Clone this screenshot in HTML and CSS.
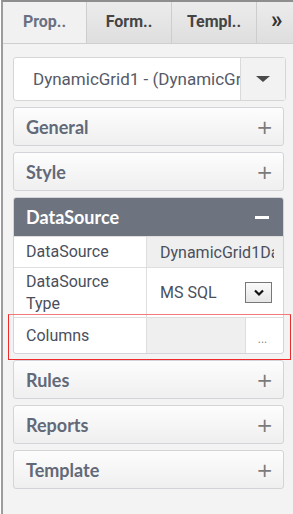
FILE: index.html
```html
<!DOCTYPE html>
<html>
<head>
	<title>Properties</title>
	<meta charset="utf-8">
	<link rel="stylesheet" href="styles.css">
</head>
<body>

	<div class="frame">
		<div class="tabs">
			<div class="tab active">Prop..</div>
			<div class="tab">Form..</div>
			<div class="tab">Templ..</div>
			<div class="tab more">&raquo;</div>
		</div>

		<div class="panel">
			<div class="picker">
				<span class="picker_text">DynamicGrid1 - (DynamicGrid)</span>
				<span class="picker_btn"><span class="caret"></span></span>
			</div>

			<div class="section"><span>General</span><span class="sign">+</span></div>
			<div class="section"><span>Style</span><span class="sign">+</span></div>

			<div class="group">
				<div class="section open"><span>DataSource</span><span class="minus"></span></div>
				<div class="row">
					<div class="name">DataSource</div>
					<div class="value grey"><span class="clip">DynamicGrid1DataSource</span></div>
				</div>
				<div class="row tall">
					<div class="name">DataSource<br>Type</div>
					<div class="value">MS SQL
						<span class="select_btn">
							<svg width="12" height="8" viewBox="0 0 12 8"><path d="M2 1.5 L6 5.5 L10 1.5" fill="none" stroke="#111" stroke-width="2.2"/></svg>
						</span>
					</div>
				</div>
				<div class="row cols">
					<div class="name">Columns</div>
					<div class="value grey"></div>
					<div class="dots">...</div>
				</div>
				<div class="mark"></div>
			</div>

			<div class="section"><span>Rules</span><span class="sign">+</span></div>
			<div class="section"><span>Reports</span><span class="sign">+</span></div>
			<div class="section"><span>Template</span><span class="sign">+</span></div>
		</div>
	</div>

</body>
</html>
```

FILE: styles.css
```css
* {
	box-sizing: border-box;
}

body {
	margin: 0px;
	background: white;
	font-family: Roboto, "Liberation Sans", sans-serif;
}

.frame {
	margin-left: 1px;
	height: 514px;
	background: #f3f3f4;
	border-left: 2px solid #9c9c9c;
	border-top: 2px solid #8e8e8e;
}

.tabs {
	display: flex;
	height: 42px;
	border-bottom: 1px solid #cfcfcf;
	background: linear-gradient(#ececec, #dedede);
}

.tab {
	width: 85px;
	border-right: 1px solid #cdcdcd;
	font-size: 16px;
	font-weight: bold;
	color: #454545;
	display: flex;
	align-items: center;
	justify-content: center;
	padding-bottom: 2px;
}

.tab.active {
	width: 84px;
	background: #f1f1f2;
	color: #6b7080;
}

.tab.more {
	width: auto;
	flex: 1;
	border-right: 0px;
	font-size: 23px;
	justify-content: flex-start;
	padding-left: 14px;
	padding-bottom: 5px;
	color: #333;
}

.panel {
	padding: 13px 9px 0px 10px;
	display: flex;
	flex-direction: column;
	gap: 6px;
}

.picker {
	display: flex;
	height: 44px;
	background: white;
	border: 1px solid #d6d6d6;
	border-radius: 3px;
	margin-right: -2px;
}

.picker_text {
	flex: 1;
	overflow: hidden;
	white-space: nowrap;
	font-size: 17px;
	color: #555a68;
	padding: 11px 0px 0px 19px;
}

.picker_btn {
	width: 45px;
	background: #f2f2f2;
	border-left: 1px solid #dadada;
	display: flex;
	align-items: center;
	justify-content: center;
}

.caret {
	width: 0px;
	height: 0px;
	border-left: 7px solid transparent;
	border-right: 7px solid transparent;
	border-top: 6px solid #4a4a4a;
}

.section {
	height: 39px;
	display: flex;
	align-items: center;
	justify-content: space-between;
	padding: 0px 12px 0px 12px;
	border: 1px solid #d4d4d8;
	border-radius: 3px;
	background: linear-gradient(#fdfdfd, #efeff0);
	font-family: Lato, sans-serif;
	font-size: 18px;
	font-weight: bold;
	color: #626978;
}

.sign {
	font-family: "DejaVu Sans", sans-serif;
	font-weight: normal;
	font-size: 20px;
	color: #7b7b7b;
	margin-right: -2px;
}

.group {
	position: relative;
	border: 1px solid #d4d4d8;
	border-radius: 3px;
	background: white;
}

.section.open {
	border: 0px;
	border-radius: 2px 2px 0px 0px;
	background: #6d7480;
	color: white;
	height: 38px;
}

.minus {
	width: 14px;
	height: 3px;
	background: white;
	margin-right: 2px;
}

.row {
	display: flex;
	height: 31px;
	border-top: 1px solid #dedede;
	font-size: 16px;
	color: #4a4f5c;
}

.row.tall {
	height: 50px;
}

.row.cols {
	height: 36px;
}

.name {
	width: 133px;
	padding: 0px 12px;
	border-right: 1px solid #dedede;
	display: flex;
	align-items: center;
	line-height: 22px;
}

.value {
	flex: 1;
	overflow: hidden;
	white-space: nowrap;
	padding: 0px 11px 0px 13px;
	display: flex;
	align-items: center;
	justify-content: space-between;
}

.value.grey {
	background: #efefef;
	padding-right: 9px;
}

.clip {
	flex: 1;
	overflow: hidden;
	white-space: nowrap;
}

.select_btn {
	width: 27px;
	height: 21px;
	border: 1px solid #777;
	background: linear-gradient(#fafafa, #e6e6e6);
	display: flex;
	align-items: center;
	justify-content: center;
}

.dots {
	width: 34px;
	border-left: 1px solid #dedede;
	color: #8a8a8a;
	font-size: 12px;
	display: flex;
	align-items: center;
	justify-content: center;
	padding-top: 6px;
	margin-right: 4px;
}

.mark {
	position: absolute;
	left: -6px;
	right: -8px;
	bottom: -7px;
	height: 46px;
	border: 1px solid #ee2a2a;
	border-top-color: #f27a7a;
}
```
